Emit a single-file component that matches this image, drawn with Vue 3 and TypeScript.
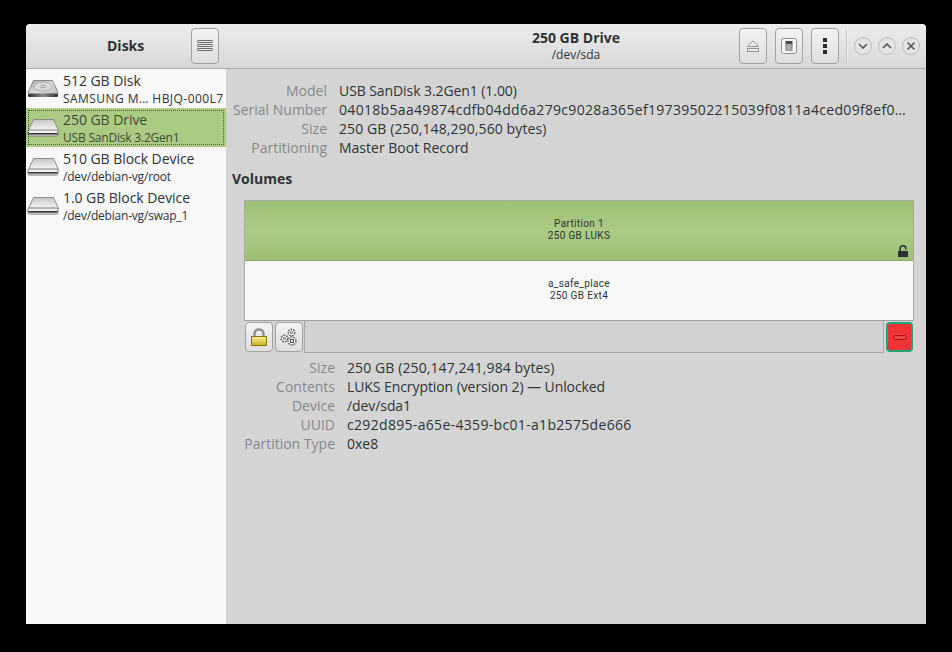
<script setup lang="ts">
interface Row { label: string; value: string; fit?: 'hex' | 'num' | 'tight' }
interface Dev { title: string; sub: string; kind: 'hdd' | 'plain'; active?: boolean; caps?: boolean }
const devices: Dev[] = [
  { title: '512 GB Disk', sub: 'SAMSUNG M… HBJQ-000L7', kind: 'hdd', caps: true },
  { title: '250 GB Drive', sub: 'USB SanDisk 3.2Gen1', kind: 'plain', active: true },
  { title: '510 GB Block Device', sub: '/dev/debian-vg/root', kind: 'plain' },
  { title: '1.0 GB Block Device', sub: '/dev/debian-vg/swap_1', kind: 'plain' },
]
const driveRows: Row[] = [
  { label: 'Model', value: 'USB SanDisk 3.2Gen1 (1.00)', fit: 'tight' },
  { label: 'Serial Number', value: '04018b5aa49874cdfb04dd6a279c9028a365ef19739502215039f0811a4ced09f8ef0…', fit: 'hex' },
  { label: 'Size', value: '250 GB (250,148,290,560 bytes)', fit: 'num' },
  { label: 'Partitioning', value: 'Master Boot Record' },
]
const volRows: Row[] = [
  { label: 'Size', value: '250 GB (250,147,241,984 bytes)', fit: 'num' },
  { label: 'Contents', value: 'LUKS Encryption (version 2) — Unlocked', fit: 'tight' },
  { label: 'Device', value: '/dev/sda1', fit: 'tight' },
  { label: 'UUID', value: 'c292d895-a65e-4359-bc01-a1b2575de666', fit: 'hex' },
  { label: 'Partition Type', value: '0xe8' },
]
</script>

<template>
  <div class="window">
    <header class="header">
      <div class="head-left">
        <span class="app-title">Disks</span>
        <button class="btn menu-btn" aria-label="Menu">
          <svg width="16" height="14" viewBox="0 0 16 14"><g fill="#eee" stroke="#6a6a6a"><rect x="0.5" y="1.5" width="15" height="2" rx="0.6"/><rect x="0.5" y="5.5" width="15" height="2" rx="0.6"/><rect x="0.5" y="9.5" width="15" height="2" rx="0.6"/></g></svg>
        </button>
      </div>
      <div class="head-right">
        <div></div>
        <div class="head-center">
          <div class="dev-title">250 GB Drive</div>
          <div class="dev-sub">/dev/sda</div>
        </div>
        <div class="head-tools">
          <div class="actions">
            <button class="btn act-btn" aria-label="Eject">
              <svg width="14" height="12" viewBox="0 0 14 12"><path d="M7 .8 12.6 6.500H1.400Z" fill="#ededed" stroke="#929292"/><rect x="1.500" y="8.500" width="11" height="3" fill="#ededed" stroke="#929292"/></svg>
            </button>
            <button class="btn act-btn" aria-label="Power">
              <svg width="16" height="16" viewBox="0 0 16 16">
                <defs><linearGradient id="sw" x1="0" y1="0" x2="0" y2="1"><stop offset="0" stop-color="#3c3c3c"/><stop offset="1" stop-color="#9c9c9c"/></linearGradient></defs>
                <rect x="0.500" y="0.500" width="15" height="15" rx="2" fill="#f8f8f8" stroke="#8c8c8c"/>
                <rect x="4.500" y="3" width="7" height="10" rx="0.500" fill="url(#sw)"/>
                <rect x="5.500" y="6" width="5" height="6" fill="#aaa"/>
              </svg>
            </button>
            <button class="btn act-btn" aria-label="More">
              <svg width="4" height="16" viewBox="0 0 4 16"><rect width="4" height="4" fill="#2a2a2a"/><rect y="6" width="4" height="4" fill="#2a2a2a"/><rect y="12" width="4" height="4" fill="#2a2a2a"/></svg>
            </button>
          </div>
          <div class="sep"></div>
          <div class="wm">
            <span class="wm-btn"><svg width="10" height="6" viewBox="0 0 10 6"><path d="M1 1 5 5 9 1" fill="none" stroke="#555" stroke-width="1.600"/></svg></span>
            <span class="wm-btn"><svg width="10" height="6" viewBox="0 0 10 6"><path d="M1 5 5 1 9 5" fill="none" stroke="#555" stroke-width="1.600"/></svg></span>
            <span class="wm-btn"><svg width="10" height="10" viewBox="0 0 10 10"><path d="M1.500 1.500 8.500 8.500M8.500 1.500 1.500 8.500" fill="none" stroke="#555" stroke-width="1.600"/></svg></span>
          </div>
        </div>
      </div>
    </header>

    <div class="content">
      <aside class="sidebar">
        <div v-for="d in devices" :key="d.title" class="dev" :class="{ active: d.active }">
          <svg v-if="d.kind === 'hdd'" class="dev-icon" width="32" height="20" viewBox="0 0 32 20">
            <defs>
              <linearGradient id="hddtop" x1="0" y1="0" x2="1" y2="1"><stop offset="0" stop-color="#a8a8a8"/><stop offset="0.5" stop-color="#dcdcdc"/><stop offset="1" stop-color="#bcbcbc"/></linearGradient>
              <linearGradient id="hddfront" x1="0" y1="0" x2="1" y2="0"><stop offset="0" stop-color="#2e2e2e"/><stop offset="0.5" stop-color="#8c8c8c"/><stop offset="1" stop-color="#2e2e2e"/></linearGradient>
            </defs>
            <path d="M6.500 1.500H25.500L31 13.500C31 15 30 16 29 16H3C2 16 1 15 1 13.500Z" fill="url(#hddtop)" stroke="#888"/>
            <rect x="1" y="14.500" width="30" height="3.500" rx="1.500" fill="url(#hddfront)"/>
            <ellipse cx="16" cy="7.500" rx="9" ry="4.500" fill="#dadada" stroke="#b0b0b0"/>
            <ellipse cx="16" cy="7.500" rx="2.500" ry="1.200" fill="#eee" stroke="#9a9a9a"/>
          </svg>
          <svg v-else class="dev-icon" width="32" height="20" viewBox="0 0 32 20">
            <defs>
              <linearGradient id="plaintop" x1="0" y1="0" x2="0" y2="1"><stop offset="0" stop-color="#c6c6c4"/><stop offset="1" stop-color="#f6f6f4"/></linearGradient>
            </defs>
            <path d="M6.500 1.500H26.500L31.500 12.500H1.500Z" fill="url(#plaintop)" stroke="#8c8c8c"/>
            <rect x="1" y="12" width="30" height="6" rx="1.500" fill="#f2f2f0" stroke="#777"/>
            <rect x="1.500" y="15" width="29" height="1.600" fill="#333"/>
          </svg>
          <div class="dev-text">
            <div class="dev-name">{{ d.title }}</div>
            <div class="dev-desc" :class="{ caps: d.caps }">{{ d.sub }}</div>
          </div>
        </div>
      </aside>

      <main class="main">
        <dl class="props drive-props">
          <template v-for="r in driveRows" :key="r.label">
            <dt>{{ r.label }}</dt>
            <dd :class="r.fit">{{ r.value }}</dd>
          </template>
        </dl>
        <h2 class="volumes">Volumes</h2>
        <div class="vol-area">
          <div class="map">
            <div class="part outer">
              <div>Partition 1</div>
              <div>250 GB LUKS</div>
              <svg class="lock" width="10" height="12" viewBox="0 0 10 12"><path d="M2.200 6.500V3.300C2.200 1.500 3.500.8 5 .8S7.800 1.500 7.800 3.300V4.500" fill="none" stroke="#2e3436" stroke-width="1.600"/><rect y="6" width="10" height="6" rx="0.500" fill="#2e3436"/></svg>
            </div>
            <div class="part inner">
              <div>a_safe_place</div>
              <div>250 GB Ext4</div>
            </div>
          </div>
          <div class="toolbar">
            <button class="btn tool-btn" aria-label="Lock">
              <svg width="18" height="18" viewBox="0 0 18 18">
                <defs><linearGradient id="lockg" x1="0" y1="0" x2="0" y2="1"><stop offset="0" stop-color="#f8f09a"/><stop offset="1" stop-color="#c8b01e"/></linearGradient></defs>
                <path d="M4.500 9V6C4.500 2.800 6.500 1.500 9 1.500S13.500 2.800 13.500 6V9" fill="none" stroke="#8e8e8e" stroke-width="2.400"/>
                <rect x="1.500" y="8.500" width="15" height="9" fill="url(#lockg)" stroke="#85780f"/>
              </svg>
            </button>
            <button class="btn tool-btn" aria-label="Settings">
              <svg width="18" height="18" viewBox="0 0 18 18"><g fill="#efefef" stroke="#555" stroke-width="1.300" stroke-dasharray="1.800 1"><circle cx="11.500" cy="4.500" r="3.300"/><circle cx="4.500" cy="10.500" r="3.300"/><circle cx="12" cy="13" r="4"/></g><g fill="#efefef" stroke="#555"><circle cx="11.500" cy="4.500" r="1"/><circle cx="4.500" cy="10.500" r="1"/><rect x="10.500" y="11.500" width="3" height="3"/></g></svg>
            </button>
            <div class="tool-fill"></div>
            <button class="btn del-btn" aria-label="Delete">
              <svg width="14" height="5" viewBox="0 0 14 5"><rect x="0.600" y="0.600" width="12.800" height="3.800" rx="1.800" fill="#ee4a4a" stroke="#a01018" stroke-width="1"/></svg>
            </button>
          </div>
          <dl class="props vol-props">
            <template v-for="r in volRows" :key="r.label">
              <dt>{{ r.label }}</dt>
              <dd :class="r.fit">{{ r.value }}</dd>
            </template>
          </dl>
        </div>
      </main>
    </div>
  </div>
</template>

<style>
html, body { margin: 0; background: #000; }
</style>

<style scoped>
.window {
  position: relative;
  width: 900px;
  height: 600px;
  margin: 24px 26px 28px;
  display: flex;
  flex-direction: column;
  overflow: hidden;
  border-radius: 4px 4px 0 0;
  font-family: "Open Sans", "Noto Sans", sans-serif;
  font-size: 14px;
  color: #2e3436;
  background: #d4d4d4;
}
.header {
  flex: 0 0 45px;
  box-sizing: border-box;
  display: flex;
  background: linear-gradient(#ececec, #d8d8d8);
  border-bottom: 1px solid #a9a9a9;
}
.head-left {
  width: 200px;
  flex: none;
  display: flex;
  align-items: center;
  justify-content: space-between;
  box-sizing: border-box;
  padding: 0 7px 0 81px;
}
.app-title { font-weight: 700; line-height: 19px; margin-top: -2px; }
.head-right {
  flex: 1;
  min-width: 0;
  display: grid;
  grid-template-columns: minmax(0, 1fr) auto minmax(0, 1fr);
  align-items: center;
  padding-right: 6px;
  padding-left: 6px;
}
.head-center { text-align: center; }
.head-tools { display: flex; align-items: center; justify-content: flex-end; }
.dev-title { font-weight: 700; line-height: 18px; }
.dev-sub { font-size: 12px; line-height: 16px; }
.actions { display: flex; gap: 8px; margin-right: 7px; }
.btn {
  box-sizing: border-box;
  padding: 0;
  margin: 0;
  display: flex;
  align-items: center;
  justify-content: center;
  border: 1px solid #a2a2a2;
  border-radius: 4px;
  background: linear-gradient(#f2f2f2, #dedede);
}
.menu-btn { width: 28px; height: 36px; }
.act-btn { width: 28px; height: 36px; }
.sep { width: 1px; height: 32px; background: #bdbdbd; box-shadow: 1px 0 #f0f0f0; margin-right: 7px; }
.wm { display: flex; gap: 6px; }
.wm-btn {
  box-sizing: border-box;
  width: 18px;
  height: 18px;
  border-radius: 50%;
  border: 1px solid #bcbcbc;
  background: #e4e4e4;
  display: flex;
  align-items: center;
  justify-content: center;
}
.content { flex: 1; display: flex; min-height: 0; }
.sidebar { width: 200px; flex: none; background: #f7f7f7; }
.dev {
  height: 39px;
  box-sizing: border-box;
  display: flex;
  align-items: center;
  overflow: hidden;
  position: relative;
}
.dev.active { background: #abcb85; color: #3d4a30; }
.dev.active::after {
  content: "";
  position: absolute;
  inset: 2px;
  border: 1px dotted #4a5a38;
}
.dev-icon { flex: none; margin: 0 4px 0 1px; }
.dev-name { line-height: 20px; white-space: nowrap; letter-spacing: -0.05px; }
.dev-desc { font-size: 12px; line-height: 16px; white-space: nowrap; letter-spacing: -0.2px; }
.dev-desc.caps { letter-spacing: 0.45px; }
.main { flex: 1; min-width: 0; padding: 12px 12px 0 6px; box-sizing: border-box; }
.props { margin: 0; display: grid; grid-auto-rows: 19px; column-gap: 12px; line-height: 19px; }
.props dt { color: #85888a; text-align: right; white-space: nowrap; }
.props dd { margin: 0; color: #2e3436; white-space: nowrap; overflow: hidden; min-width: 0; }
.props dd.hex { letter-spacing: 0.32px; }
.props dd.num { letter-spacing: 0.1px; }
.props dd.tight { letter-spacing: -0.08px; }
.drive-props { grid-template-columns: 95px minmax(0, 1fr); }
.vol-props { grid-template-columns: 91px minmax(0, 1fr); margin-top: 5px; }
.volumes { margin: 12px 0 12px; font-size: 14px; font-weight: 700; line-height: 19px; }
.vol-area { margin-left: 12px; }
.map {
  box-sizing: border-box;
  height: 121px;
  border: 1px solid #a9a9a9;
  border-bottom-color: #a0a0a0;
  background: #f7f7f7;
  display: flex;
  flex-direction: column;
  font-family: Roboto, "Open Sans", sans-serif;
  font-size: 10px;
  letter-spacing: 0.35px;
  line-height: 12px;
  text-align: center;
}
.part { display: flex; flex-direction: column; justify-content: center; position: relative; }
.outer { height: 60px; padding-bottom: 2px; background: linear-gradient(#9dbf74, #accb86 50%, #9dbf74); border-bottom: 1px solid #8fa86c; box-sizing: border-box; }
.inner { flex: 1; padding-bottom: 2px; }
.lock { position: absolute; right: 5px; bottom: 3px; }
.toolbar { display: flex; align-items: flex-start; height: 32px; }
.tool-btn { width: 28px; height: 30px; margin: 1px 1px 0 1px; }
.tool-fill { flex: 1; height: 32px; box-sizing: border-box; border: 1px solid #a9a9a9; border-top: 0; background: #d2d2d2; }
.del-btn {
  width: 27px;
  height: 30px;
  margin: 1px 1px 0 2px;
  background: #ee3434;
  border: 2px solid #1ea47a;
}
</style>
